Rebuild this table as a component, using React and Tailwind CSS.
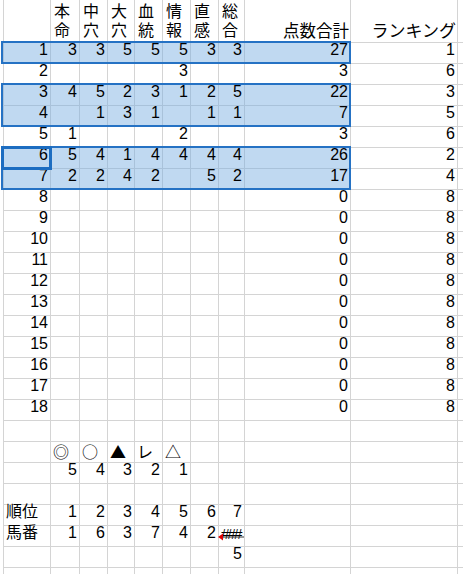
import React from 'react';

const W = ['w-[47px]', 'w-[29px]', 'w-[28px]', 'w-[27px]', 'w-[28px]', 'w-[28px]', 'w-[28px]', 'w-[26px]', 'w-[106px]', 'w-[107px]'];

const data = [
  [1, 3, 3, 5, 5, 5, 3, 3, 27, 1],
  [2, '', '', '', '', 3, '', '', 3, 6],
  [3, 4, 5, 2, 3, 1, 2, 5, 22, 3],
  [4, '', 1, 3, 1, '', 1, 1, 7, 5],
  [5, 1, '', '', '', 2, '', '', 3, 6],
  [6, 5, 4, 1, 4, 4, 4, 4, 26, 2],
  [7, 2, 2, 4, 2, '', 5, 2, 17, 4],
  ...Array.from({ length: 11 }, (_, i) => [i + 8, '', '', '', '', '', '', '', 0, 8]),
];

const Cell = ({ i, sel, children, className = '' }) => (
  <div
    className={`${W[i]} h-full shrink-0 border-r border-b flex items-end pb-[1px] ${
      sel && i < 9 ? 'bg-[#c0d9f1] border-[#a9c2da]' : 'border-[#d4d4d4]'
    } ${className}`}
  >
    {children}
  </div>
);

const Row = ({ cells, sel, left = [], sym }) => (
  <div className={`flex h-[21px] border-l ${sel ? 'border-[#a9c2da]' : 'border-[#d4d4d4]'}`}>
    {W.map((_, i) => (
      <Cell
        key={i}
        i={i}
        sel={sel}
        className={`${left.includes(i) ? 'justify-start pl-[2px]' : 'justify-end pr-[2px]'} ${sym ? 'font-["Noto_Sans_CJK_JP"] leading-[20px]' : ''}`}
      >
        {cells[i]}
      </Cell>
    ))}
    <div className="flex-1 h-full border-b border-[#d4d4d4]" />
  </div>
);

const Block = ({ rows, active }) => (
  <div className="relative">
    {rows.map((r) => (
      <Row key={r[0]} cells={r} sel />
    ))}
    <div className="absolute left-[-2px] top-[-2px] w-[350px] h-[calc(100%+2px)] border-2 border-[#2572c4] pointer-events-none" />
    {active && (
      <div className="absolute left-[-2px] top-[-2px] w-[51px] h-[24px] border-[3px] border-[#1c6dc1] pointer-events-none" />
    )}
  </div>
);

const heads = [['本', '命'], ['中', '穴'], ['大', '穴'], ['血', '統'], ['情', '報'], ['直', '感'], ['総', '合']];

export default function App() {
  const blank = ['', '', '', '', '', '', '', '', '', ''];
  const hashes = <span className="text-[15.5px] tracking-[-2.3px] pr-[2px]">###</span>;
  return (
    <div className="w-[463px] h-[574px] overflow-hidden bg-white text-black text-[16px] pl-[3px]" style={{ fontFamily: '"Liberation Sans", "Noto Sans CJK JP", sans-serif' }}>
      {/* header */}
      <div className="flex h-[43px] border-l border-b border-[#d4d4d4]">
        <div className={`${W[0]} shrink-0 border-r border-[#d4d4d4]`} />
        {heads.map((h, i) => (
          <div key={i} className={`${W[i + 1]} shrink-0 border-r border-[#d4d4d4] pl-[3px] pt-[2px] leading-[19px] flex flex-col`}>
            <span>{h[0]}</span>
            <span>{h[1]}</span>
          </div>
        ))}
        <div className={`${W[8]} shrink-0 border-r border-[#d4d4d4] flex items-end justify-end pr-[1px] pb-[1px] leading-[19px] text-[16.5px]`}>点数合計</div>
        <div className={`${W[9]} shrink-0 border-r border-[#d4d4d4] flex items-end justify-end pr-[1px] pb-[1px] leading-[19px] text-[17px]`}>ランキング</div>
        <div className="flex-1" />
      </div>

      <Block rows={[data[0]]} />
      <Row cells={data[1]} />
      <Block rows={[data[2], data[3]]} />
      <Row cells={data[4]} />
      <Block rows={[data[5], data[6]]} active />
      {data.slice(7).map((r) => (
        <Row key={r[0]} cells={r} />
      ))}

      <Row cells={blank} />
      <Row cells={['', '◎', '○', '▲', 'レ', '△', '', '', '', '']} left={[1, 2, 3, 4, 5]} sym />
      <Row cells={['', 5, 4, 3, 2, 1, '', '', '', '']} />
      <Row cells={blank} />
      <Row cells={['順位', 1, 2, 3, 4, 5, 6, 7, '', '']} left={[0]} />
      <div className="relative">
        <Row cells={['馬番', 1, 6, 3, 7, 4, 2, hashes, '', '']} left={[0]} />
        <svg className="absolute left-[215px] top-[6px] pointer-events-none" width="26" height="10" viewBox="0 0 26 10">
          <line x1="4" y1="5" x2="26" y2="5" stroke="#333" strokeWidth="1" />
          <polygon points="0,5 5,1.5 5,8.5" fill="#e00000" />
        </svg>
      </div>
      <Row cells={['', '', '', '', '', '', '', 5, '', '']} />
      <Row cells={blank} />
    </div>
  );
}
